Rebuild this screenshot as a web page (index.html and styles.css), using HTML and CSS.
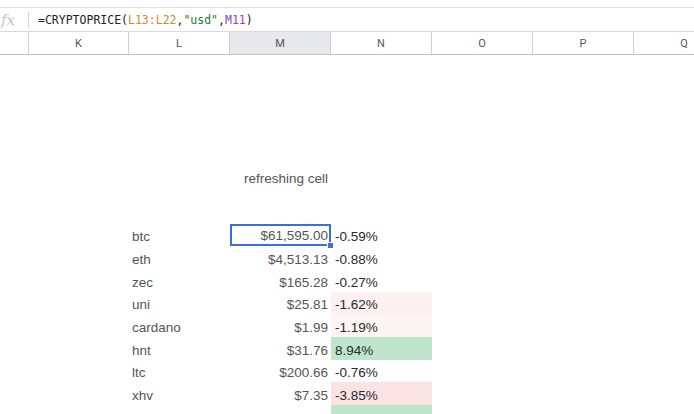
FILE: index.html
```html
<!DOCTYPE html>
<html>
<head>
<meta charset="utf-8">
<link rel="stylesheet" href="styles.css">
</head>
<body>
<div class="topstrip"></div>
<div class="fbar">
  <div class="fx">fx</div>
  <div class="formula">=CRYPTOPRICE(<span class="ref1">L13:L22</span>,<span class="str">"usd"</span>,<span class="ref2">M11</span>)</div>
</div>
<div class="hdr">
  <div class="hc corner"></div>
  <div class="hc">K</div>
  <div class="hc">L</div>
  <div class="hc sel">M</div>
  <div class="hc">N</div>
  <div class="hc">O</div>
  <div class="hc">P</div>
  <div class="hc last">Q</div>
</div>
<div class="sheet">
  <div class="row refresh">
    <div></div><div></div><div></div>
    <div class="c price">refreshing cell</div>
    <div></div><div></div><div></div><div></div>
  </div>
  <div class="gap"></div>
  <div class="row">
    <div></div><div></div><div class="c lab">btc</div>
    <div class="c price active">$61,595.00<span class="handle"></span></div>
    <div class="c pct">-0.59%</div><div></div><div></div><div></div>
  </div>
  <div class="row">
    <div></div><div></div><div class="c lab">eth</div>
    <div class="c price">$4,513.13</div>
    <div class="c pct">-0.88%</div><div></div><div></div><div></div>
  </div>
  <div class="row">
    <div></div><div></div><div class="c lab">zec</div>
    <div class="c price">$165.28</div>
    <div class="c pct">-0.27%</div><div></div><div></div><div></div>
  </div>
  <div class="row">
    <div></div><div></div><div class="c lab">uni</div>
    <div class="c price">$25.81</div>
    <div class="c pct pink1">-1.62%</div><div></div><div></div><div></div>
  </div>
  <div class="row">
    <div></div><div></div><div class="c lab">cardano</div>
    <div class="c price">$1.99</div>
    <div class="c pct pink0">-1.19%</div><div></div><div></div><div></div>
  </div>
  <div class="row">
    <div></div><div></div><div class="c lab">hnt</div>
    <div class="c price">$31.76</div>
    <div class="c pct green">8.94%</div><div></div><div></div><div></div>
  </div>
  <div class="row">
    <div></div><div></div><div class="c lab">ltc</div>
    <div class="c price">$200.66</div>
    <div class="c pct">-0.76%</div><div></div><div></div><div></div>
  </div>
  <div class="row">
    <div></div><div></div><div class="c lab">xhv</div>
    <div class="c price">$7.35</div>
    <div class="c pct pink2">-3.85%</div><div></div><div></div><div></div>
  </div>
  <div class="row">
    <div></div><div></div><div class="c lab">sol</div>
    <div class="c price">$4.41</div>
    <div class="c pct green">3.17%</div><div></div><div></div><div></div>
  </div>
</div>
</body>
</html>
```
FILE: styles.css
```css
* { box-sizing: border-box; }
html, body { margin: 0; padding: 0; background: #fff; overflow: hidden; }
body { width: 694px; height: 414px; overflow: hidden; font-family: "Liberation Sans", Arial, sans-serif; }

.topstrip { height: 8px; border-bottom: 1px solid #e2e2e2; }

.fbar {
  height: 24px;
  display: flex;
  align-items: center;
  border-bottom: 1px solid #dadada;
}
.fx {
  width: 29px;
  height: 16px;
  display: flex;
  align-items: center;
  padding-left: 1px;
  font-family: "DejaVu Serif", serif;
  font-style: italic;
  font-size: 15px;
  color: #c4c4c4;
  border-right: 1px solid #d0d0d0;
}
.formula {
  padding-left: 9px;
  font-family: "DejaVu Sans Mono", "Liberation Mono", monospace;
  font-size: 11.5px;
  color: #222;
}
.ref1 { color: #d2883c; }
.str { color: #237a2c; }
.ref2 { color: #8a44c4; }

.hdr, .row {
  display: grid;
  grid-template-columns: 29px 100px 101px 101px 101px 101px 101px 101px;
  width: 735px;
}
.hdr { height: 23px; border-bottom: 1px solid #c4c4c4; }
.hc {
  border-right: 1px solid #cfcfcf;
  display: flex;
  align-items: center;
  justify-content: center;
  font-family: Roboto, "Liberation Sans", sans-serif;
  font-size: 11px;
  color: #555;
}
.hc.sel { background: #e6e8ec; }

.sheet { padding-top: 110px; }
.refresh { height: 23px; }
.gap { height: 36px; }
.row { height: 22.67px; }

.c {
  display: flex;
  align-items: flex-end;
  padding: 0 3px 1px;
  font-size: 13.5px;
  line-height: 16px;
  white-space: nowrap;
}
.lab { color: #555; }
.price { justify-content: flex-end; color: #555; }
.pct { color: #2a2a2a; padding-left: 4px; }

.pink0 { background: #fdf5f4; }
.pink1 { background: #fcf1f0; }
.pink2 { background: #fae3e3; }
.green { background: #bfe5cc; }

.active {
  position: relative;
  border: 2px solid #3d6fd4;
  padding-right: 1px;
  padding-bottom: 0;
}
.handle {
  position: absolute;
  right: -5px;
  bottom: -5px;
  width: 7px;
  height: 7px;
  background: #3d6fd4;
  border: 1px solid #fff;
}
```
